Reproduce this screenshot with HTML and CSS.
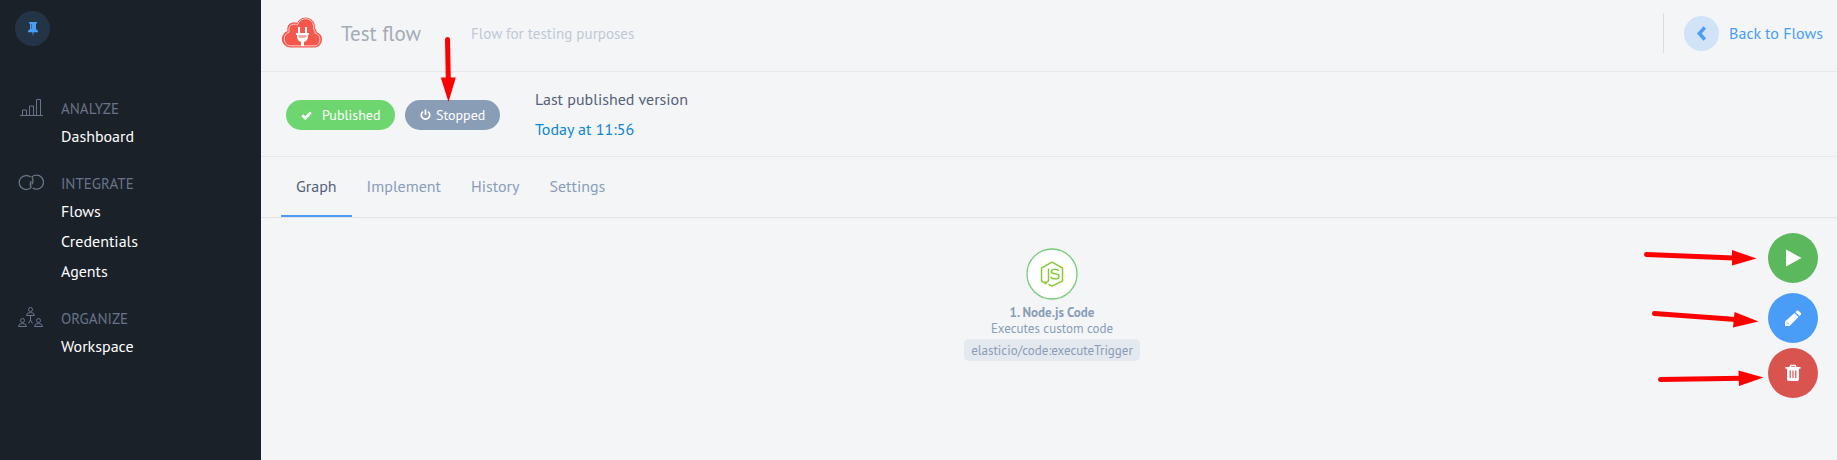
FILE: index.html
```html
<!DOCTYPE html>
<html lang="en">
<head>
<meta charset="utf-8">
<title>Test flow</title>
<link rel="stylesheet" href="styles.css">
</head>
<body>
<div class="app">
  <aside class="sidebar">
    <button class="pin" aria-label="Pin menu">
      <svg width="12" height="16" viewBox="0 0 12 16"><path fill="#499df6" d="M2 1h8v1.600H9V8l2 2v1.300H6.600L6 15.500l-.6-4.200H1V10l2-2V2.600H2z"/><path stroke="#2c6fb5" d="M4.500 3v5"/></svg>
    </button>
    <nav class="menu">
      <section class="group">
        <svg class="group-icon" width="26" height="26" viewBox="0 0 26 26"><path fill="none" stroke="#69748a" d="M2 20.500h23M4.500 20v-5h4v5M11.500 20v-9h4v9M18.500 20V4.500h4V20"/></svg>
        <h2 class="group-title">ANALYZE</h2>
        <a class="item">Dashboard</a>
      </section>
      <section class="group">
        <svg class="group-icon" width="26" height="26" viewBox="0 0 26 26"><g fill="none" stroke="#69748a" stroke-width="1.300"><path d="M12.600 7.100A7 7 0 1 0 13 17.600Q11.500 14 13.200 11"/><path d="M14.600 18A7 7 0 1 0 14 6.800Q16 11 13.800 14.500"/></g></svg>
        <h2 class="group-title">INTEGRATE</h2>
        <a class="item">Flows</a>
        <a class="item">Credentials</a>
        <a class="item">Agents</a>
      </section>
      <section class="group">
        <svg class="group-icon" width="26" height="26" viewBox="0 0 26 26"><g fill="none" stroke="#69748a"><circle cx="12.500" cy="4.500" r="2"/><path d="M8.500 10.500q0-3 4-3t4 3zM12.500 11v5M12.500 15l-2 3.500M12.500 15l2 3.500"/><circle cx="4.500" cy="15.500" r="2"/><path d="M.5 21.500q0-3 4-3t4 3z"/><circle cx="20.500" cy="15.500" r="2"/><path d="M16.500 21.500q0-3 4-3t4 3z"/></g></svg>
        <h2 class="group-title">ORGANIZE</h2>
        <a class="item">Workspace</a>
      </section>
    </nav>
  </aside>
  <main class="main">
    <header class="header">
      <svg class="logo" width="42" height="32" viewBox="0 0 42 32"><path fill="#f5574c" d="M9 30.500A8.500 8.500 0 0 1 6.500 14 Q5 7 12 5.500Q14 5 16 6A9.500 9.500 0 0 1 34 11.500Q36 13 35.500 15A8 8 0 0 1 34 30.500z"/><path fill="none" stroke="#fbc9c5" d="M9 28.800A7 7 0 0 1 8 15.300Q7 8 12.500 7.200Q15 7 16.500 8A8.200 8.200 0 0 1 32.500 12Q34.500 14 34 16.200A6.500 6.500 0 0 1 34 28.800z"/><path fill="#fff" d="M17 10h2v6h5v-6h2v6h2v2h-1v3q-1 3-4 4v4h-3v-4q-3-1-4-4v-3h-1v-2h2z"/><path fill="#f8aaa5" d="M17.500 18h8v1.500q-1 1.500-2 1.500h-4q-1.500 0-2-1.500z"/></svg>
      <h1 class="title">Test flow</h1>
      <p class="subtitle">Flow for testing purposes</p>
      <a class="back">
        <span class="back-icon"><svg width="12" height="16" viewBox="0 0 12 16"><path fill="none" stroke="#499df6" stroke-width="3.400" d="M8.800 2.500 3.300 8.500l5.500 6"/></svg></span>
        Back to Flows
      </a>
    </header>
    <section class="status">
      <span class="badge badge-published"><svg width="11" height="9" viewBox="0 0 11 9"><path fill="none" stroke="#fff" stroke-width="2.700" d="M1.200 4.200l3 3L9.900 1.500"/></svg>Published</span>
      <span class="badge badge-stopped"><svg width="11" height="12" viewBox="0 0 11 12"><path fill="none" stroke="#fff" stroke-width="1.700" d="M3 2.600a4.200 4.200 0 1 0 5 0M5.500.5v5.500"/></svg>Stopped</span>
      <div class="version">
        <div>Last published version</div>
        <div class="date">Today at 11:56</div>
      </div>
    </section>
    <nav class="tabs">
      <a class="tab tab-active">Graph</a>
      <a class="tab">Implement</a>
      <a class="tab">History</a>
      <a class="tab">Settings</a>
    </nav>
    <section class="canvas">
      <div class="node">
        <svg class="node-icon" width="52" height="52" viewBox="0 0 52 52"><circle cx="26" cy="26" r="25" fill="#fff" stroke="#76cc78" stroke-width="1.300"/><g fill="none" stroke="#8cc83c" stroke-width="1.500"><path d="M20.500 36 15.500 33V20L26 14.200 36.500 20v13L26 38.200l-3.500-2"/><path d="M22.500 20.500V32q0 2.700-3.700 2"/><path d="M32.500 23q-.5-1.700-3.500-1.700-3.700 0-3.700 2.200 0 1.900 3.700 2.300 4 .4 4 2.600 0 2.400-4 2.400-3.700 0-4-2.200"/></g></svg>
        <strong class="node-name">1. Node.js Code</strong>
        <span class="node-desc">Executes custom code</span>
        <span class="node-tag">elasticio/code:executeTrigger</span>
      </div>
      <div class="actions">
        <button class="action run" aria-label="Run"><svg width="18" height="18" viewBox="0 0 18 18"><path fill="#fff" d="M2 .5 17.500 9 2 17.500z"/></svg></button>
        <button class="action edit" aria-label="Edit"><svg width="18" height="18" viewBox="0 0 18 18"><path fill="#fff" d="M12.800 1.700q.8-.9 1.700 0l2.300 2.300q.8.900 0 1.700l-1.400 1.400-4-4zM10.500 4l4 4-9 9H1v-4.500z"/><path fill="none" stroke="#499df6" d="M2.800 13.300l2 2"/></svg></button>
        <button class="action delete" aria-label="Delete"><svg width="18" height="18" viewBox="0 0 18 18"><path fill="none" stroke="#fff" stroke-width="1.500" d="M6 3.500 6.800 1.500h4.400L12 3.500"/><path fill="#fff" d="M1.500 3h15v1.700H15V15q0 2-1.700 2H4.700Q3 17 3 15V4.700H1.500z"/><path stroke="#d9534f" stroke-width="1.200" d="M6.200 6.500V14M9 6.500V14M11.800 6.500V14"/></svg></button>
      </div>
    </section>
  </main>
  <svg class="arrows" width="1837" height="460" viewBox="0 0 1837 460">
    <g stroke="#f00" stroke-width="5" stroke-linecap="round"><path d="M447.500 39.500 448.300 79M1646.500 254.500 1734 258M1654.500 313.500 1736 319.500M1660.500 379.500 1742 378.300"/></g>
    <g fill="#f00"><path d="M440.800 77.500h15L448.500 102zM1732 250v15.500l24.500-7zM1734.500 312l-1.500 15.500 25.500-6zM1738.500 370.500l.5 15.500 24.500-8.500z"/></g>
  </svg>
</div>
</body>
</html>
```
FILE: styles.css
```css
* { box-sizing: border-box; }
body { margin: 0; font-family: "PT Sans", "Noto Sans", sans-serif; font-size: 16px; font-stretch: semi-condensed; white-space: nowrap; color: #53617a; }
h1, h2, p { margin: 0; font-weight: 400; }
button { border: 0; padding: 0; }
svg { display: block; flex: none; }
.app { position: relative; display: flex; width: 1837px; height: 460px; background: #f3f5f7; overflow: hidden; }
.sidebar { width: 261px; flex: none; padding: 11px 15px; background: #1b2129; }
.pin { display: flex; align-items: center; justify-content: center; width: 35px; height: 35px; border-radius: 50%; background: #243447; }
.menu { display: flex; flex-direction: column; gap: 19px; margin-top: 49px; }
.group { display: grid; grid-template-columns: 46px 1fr; }
.group-icon { grid-column: 1; grid-row: 1; margin-left: 3px; }
.group-title { grid-column: 2; padding-top: 2px; font-size: 15px; line-height: 24px; color: #69748a; }
.item { grid-column: 2; line-height: 30px; color: #fff; }
.main { flex: 1; display: flex; flex-direction: column; }
.header { display: flex; align-items: center; height: 72px; padding: 0 14px 5px 20px; border-bottom: 1px solid #e6e8eb; }
.title { width: 130px; margin-left: 18px; font-size: 21px; color: #a4abb5; }
.subtitle { font-size: 15px; letter-spacing: 0.04px; color: #bfc8d6; }
.back { display: flex; align-items: center; height: 40px; margin-left: auto; padding-left: 20px; border-left: 1px solid #d9dce0; color: #499df6; }
.back-icon { display: flex; align-items: center; justify-content: center; width: 35px; height: 35px; margin-right: 10px; border-radius: 50%; background: #d1e3f6; }
.status { display: flex; align-items: center; height: 85px; padding-left: 25px; border-bottom: 1px solid #e6e8eb; }
.badge { display: flex; align-items: center; height: 30px; margin-top: 2px; border-radius: 15px; font-size: 14px; color: #fff; }
.badge-published { width: 109px; padding-left: 15px; gap: 10px; background: #6dd66f; }
.badge-stopped { width: 95px; margin-left: 10px; padding-left: 15px; gap: 5px; background: #8a9db7; }
.version { margin-left: 35px; line-height: 30px; }
.date { color: #0e87cc; }
.tabs { display: flex; height: 61px; padding-left: 20px; border-bottom: 1px solid #e1e3e7; }
.tab { display: flex; align-items: center; padding: 0 15px; border-bottom: 2px solid transparent; color: #8a9db7; }
.tab-active { color: #53617a; border-bottom-color: #499df6; }
.canvas { position: relative; flex: 1; }
.node { display: flex; flex-direction: column; align-items: center; width: 182px; margin: 30px auto 0; transform: translateX(3px); font-size: 13px; color: #8a9db7; }
.node-icon { margin-bottom: 5px; }
.node-name, .node-desc { line-height: 16px; }
.node-tag { margin-top: 2px; padding-top: 2px; width: 176px; text-align: center; line-height: 20px; border-radius: 5px; background: #e4e8ef; }
.actions { position: absolute; top: 15px; right: 19px; display: flex; flex-direction: column; }
.action { display: flex; align-items: center; justify-content: center; width: 50px; height: 50px; border-radius: 50%; }
.run { background: #5cb85c; }
.edit { margin-top: 10px; background: #499df6; }
.delete { margin-top: 5px; background: #d9534f; }
.arrows { position: absolute; inset: 0; pointer-events: none; }
```
